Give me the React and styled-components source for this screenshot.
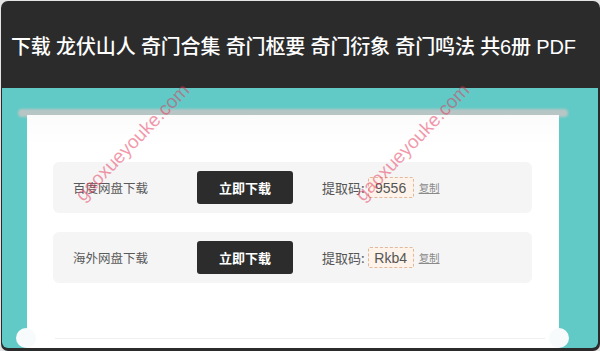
import React from "react";
import styled, { createGlobalStyle } from "styled-components";

const GlobalStyle = createGlobalStyle`
  html, body {
    margin: 0;
    padding: 0;
    background: #e4e4e4;
  }
  body {
    font-family: "Liberation Sans", "Noto Sans CJK SC", sans-serif;
  }
  * {
    box-sizing: border-box;
  }
`;

const links = [
  { name: "百度网盘下载", code: "9556" },
  { name: "海外网盘下载", code: "Rkb4" },
];

const App = () => {
  return (
    <>
      <GlobalStyle />
      <Frame>
        <Header>
          <Title>下载 龙伏山人 奇门合集 奇门枢要 奇门衍象 奇门鸣法 共6册 PDF</Title>
        </Header>
        <Stage>
          <Slot />
          <Card>
            {links.map((item) => (
              <Row key={item.name}>
                <Label>{item.name}</Label>
                <DownloadButton>立即下载</DownloadButton>
                <CodeLabel>提取码:</CodeLabel>
                <Code>{item.code}</Code>
                <Copy>复制</Copy>
              </Row>
            ))}
            <TearLine>
              <Dash />
            </TearLine>
          </Card>
        </Stage>
        <Watermark $left={78}>gaoxueyouke.com</Watermark>
        <Watermark $left={358}>gaoxueyouke.com</Watermark>
      </Frame>
    </>
  );
};

const Frame = styled.div`
  position: relative;
  margin: 1px 0 0 1px;
  width: 599px;
  height: 350px;
  background: #2b2b2b;
  border-radius: 7px;
  overflow: hidden;
  display: flex;
  flex-direction: column;
  padding: 0 2px 3px 1px;
`;

const Header = styled.header`
  height: 87px;
  display: flex;
  align-items: center;
  padding: 1px 0 0 9px;
`;

const Title = styled.h1`
  margin: 0;
  color: #ffffff;
  font-family: "Liberation Sans", "Noto Sans CJK SC", sans-serif;
  font-size: 20px;
  font-weight: 500;
  white-space: nowrap;
  letter-spacing: -0.15px;
`;

const Stage = styled.section`
  flex: 1;
  background: #62cac6;
  border-radius: 0 0 6px 6px;
  padding-top: 21px;
  display: flex;
  flex-direction: column;
  min-height: 0;
`;

const Slot = styled.div`
  height: 8px;
  margin: 0 30px 0 16px;
  border-radius: 4px;
  background: #b7c6c5;
  filter: blur(1px);
`;

const Card = styled.div`
  position: relative;
  flex: 1;
  margin: -2px 39px 0 25px;
  padding: 47px 27px 0 26px;
  background: linear-gradient(#fbfbfb, #ffffff 30px);
  display: flex;
  flex-direction: column;
  gap: 19px;
`;

const Row = styled.div`
  height: 51px;
  display: flex;
  align-items: center;
  padding-left: 20px;
  background: #f5f5f5;
  border-radius: 6px;
`;

const Label = styled.span`
  width: 124px;
  color: #5a5a5a;
  font-family: "Noto Sans CJK SC", sans-serif;
  font-size: 12.5px;
`;

const DownloadButton = styled.button`
  width: 96px;
  height: 33px;
  border: none;
  border-radius: 3px;
  background: #2c2c2c;
  color: #ffffff;
  font-family: "Noto Sans CJK SC", sans-serif;
  font-size: 13px;
  font-weight: 700;
  padding: 0;
`;

const CodeLabel = styled.span`
  margin-left: 29px;
  color: #555555;
  font-family: "Noto Sans CJK SC", sans-serif;
  font-size: 13px;
`;

const Code = styled.span`
  margin-left: 3px;
  width: 46px;
  height: 21px;
  display: flex;
  align-items: center;
  justify-content: center;
  background: #fdf3ea;
  border: 1px dashed #e2b89c;
  border-radius: 2px;
  color: #555555;
  font-family: "Liberation Sans", sans-serif;
  font-size: 14px;
`;

const Copy = styled.span`
  margin-left: 5px;
  color: #8a8a8a;
  font-family: "Noto Sans CJK SC", sans-serif;
  font-size: 10.5px;
  text-decoration: underline;
`;

const TearLine = styled.div`
  position: relative;
  margin: 26px -27px 0 -26px;
  height: 20px;
  display: flex;
  align-items: center;

  &::before,
  &::after {
    content: "";
    position: absolute;
    top: 0;
    width: 20px;
    height: 20px;
    border-radius: 50%;
    background: #f7fbfb;
  }
  &::before {
    left: -11px;
  }
  &::after {
    right: -10px;
  }
`;

const Dash = styled.div`
  flex: 1;
  margin: 0 14px 0 28px;
  border-top: 1px solid #f0f0f0;
`;

const Watermark = styled.div`
  position: absolute;
  left: ${({ $left }) => $left}px;
  top: 187px;
  line-height: 20px;
  font-family: "Liberation Sans", sans-serif;
  font-size: 19px;
  color: rgba(228, 52, 88, 0.5);
  white-space: nowrap;
  transform: rotate(-46deg);
  transform-origin: left center;
  pointer-events: none;
`;

export default App;
